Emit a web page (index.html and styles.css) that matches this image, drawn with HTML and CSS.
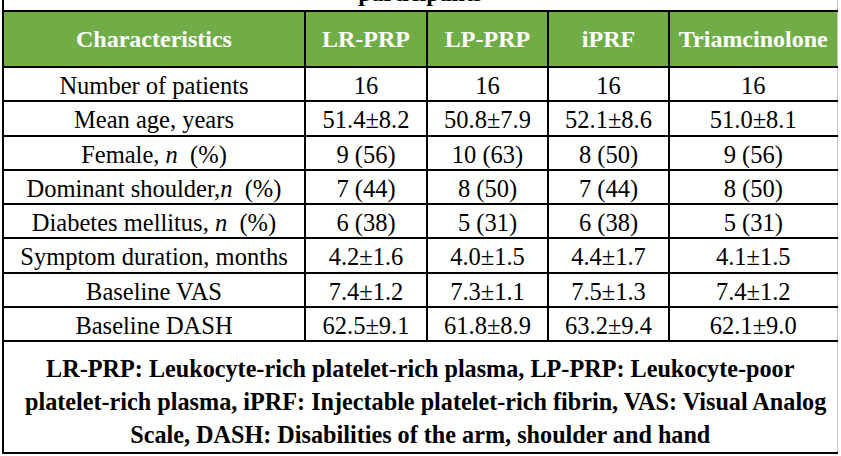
FILE: index.html
```html
<!DOCTYPE html>
<html lang="en">
<head>
<meta charset="utf-8">
<title>Participants characteristics</title>
<link rel="stylesheet" href="styles.css">
</head>
<body>
<table class="tbl">
  <colgroup>
    <col class="c-char">
    <col class="c-first">
    <col class="c-num">
    <col class="c-num">
    <col class="c-last">
  </colgroup>
  <tr class="title-row">
    <td colspan="5"><div class="title-clip"><span class="title-text">participants</span></div></td>
  </tr>
  <tr class="head-row">
    <th>Characteristics</th>
    <th>LR-PRP</th>
    <th>LP-PRP</th>
    <th>iPRF</th>
    <th>Triamcinolone</th>
  </tr>
  <tr class="data-row">
    <td>Number of patients</td><td>16</td><td>16</td><td>16</td><td>16</td>
  </tr>
  <tr class="data-row">
    <td>Mean age, years</td><td>51.4±8.2</td><td>50.8±7.9</td><td>52.1±8.6</td><td>51.0±8.1</td>
  </tr>
  <tr class="data-row">
    <td>Female, <i>n</i> &nbsp;(%)</td><td>9 (56)</td><td>10 (63)</td><td>8 (50)</td><td>9 (56)</td>
  </tr>
  <tr class="data-row">
    <td>Dominant shoulder,<i>n</i> &nbsp;(%)</td><td>7 (44)</td><td>8 (50)</td><td>7 (44)</td><td>8 (50)</td>
  </tr>
  <tr class="data-row">
    <td>Diabetes mellitus, <i>n</i> &nbsp;(%)</td><td>6 (38)</td><td>5 (31)</td><td>6 (38)</td><td>5 (31)</td>
  </tr>
  <tr class="data-row">
    <td>Symptom duration, months</td><td>4.2±1.6</td><td>4.0±1.5</td><td>4.4±1.7</td><td>4.1±1.5</td>
  </tr>
  <tr class="data-row">
    <td>Baseline VAS</td><td>7.4±1.2</td><td>7.3±1.1</td><td>7.5±1.3</td><td>7.4±1.2</td>
  </tr>
  <tr class="data-row">
    <td>Baseline DASH</td><td>62.5±9.1</td><td>61.8±8.9</td><td>63.2±9.4</td><td>62.1±9.0</td>
  </tr>
  <tr class="foot-row">
    <td colspan="5"><div class="foot-text">LR-PRP: Leukocyte-rich platelet-rich plasma, LP-PRP: Leukocyte-poor<br>platelet-rich plasma, iPRF: Injectable platelet-rich fibrin, VAS: Visual Analog<br>Scale, DASH: Disabilities of the arm, shoulder and hand</div></td>
  </tr>
</table>
</body>
</html>
```
FILE: styles.css
```css
html, body {
  margin: 0;
  padding: 0;
  background: #ffffff;
}

body {
  font-family: "Liberation Serif", "Times New Roman", serif;
  color: #000;
  overflow: hidden;
}

.tbl {
  border-collapse: collapse;
  table-layout: fixed;
  width: 834px;
  margin-left: 2px;
}

.c-char { width: 302px; }
.c-first { width: 122px; }
.c-num { width: 121px; }
.c-last { width: 168px; }

.tbl td, .tbl th {
  border: 2px solid #000;
  padding: 0;
  text-align: center;
  vertical-align: middle;
  white-space: nowrap;
}

.tbl tr > :last-child {
  border-right: 1px solid #c8c8c8;
}

.title-row td {
  border-top: none;
  height: 10px;
}

.title-clip {
  height: 10px;
  overflow: hidden;
}

.title-text {
  display: block;
  font-weight: bold;
  font-size: 24px;
  line-height: 24px;
  margin-top: -19px;
}

.head-row th {
  background: #70ad47;
  color: #fff;
  font-weight: bold;
  font-size: 24px;
  height: 54px;
  line-height: 26px;
}

.data-row td {
  font-size: 24.5px;
  height: 28.25px;
  line-height: 26px;
  padding-top: 4px;
}

.foot-row td {
  height: 100px;
  padding: 10px 21px 0;
  vertical-align: top;
}

.foot-text {
  font-weight: bold;
  font-size: 24.2px;
  line-height: 33px;
  text-align: center;
  white-space: nowrap;
}
```
